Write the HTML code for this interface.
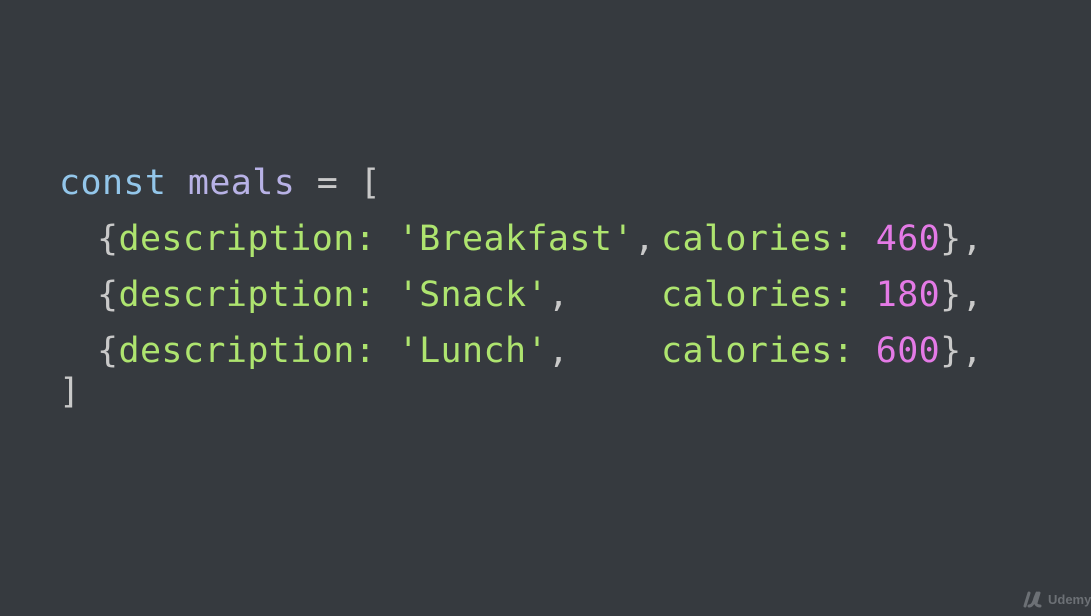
<!DOCTYPE html>
<html><head><style>
html,body{margin:0;padding:0;}
body{width:1091px;height:616px;background:#363a3f;position:relative;overflow:hidden;font-family:"DejaVu Sans Mono","Liberation Mono",monospace;font-size:35px;letter-spacing:0.4px;}
.l{position:absolute;white-space:pre;line-height:40px;}
.k{color:#93c6ea}.v{color:#b8b2e6}.p{color:#c9c9c9}.g{color:#aee46f}.n{color:#e47ae6}
</style></head><body>
<div class="l" style="left:59px;top:163px"><span class="k">const</span> <span class="v">meals</span> <span class="p">= [</span></div>
<div class="l" style="left:97px;top:219px"><span class="p">{</span><span class="g">description: 'Breakfast'</span><span class="p">,</span></div>
<div class="l" style="left:97px;top:275px"><span class="p">{</span><span class="g">description: 'Snack'</span><span class="p">,</span></div>
<div class="l" style="left:97px;top:331px"><span class="p">{</span><span class="g">description: 'Lunch'</span><span class="p">,</span></div>
<div class="l" style="left:661px;top:219px"><span class="g">calories: </span><span class="n">460</span><span class="p">},</span></div>
<div class="l" style="left:661px;top:275px"><span class="g">calories: </span><span class="n">180</span><span class="p">},</span></div>
<div class="l" style="left:661px;top:331px"><span class="g">calories: </span><span class="n">600</span><span class="p">},</span></div>
<div class="l p" style="left:59px;top:372px">]</div>
<div style="position:absolute;left:1022px;top:590px;color:#6c7075;font-family:'Liberation Sans',sans-serif;font-weight:bold;font-size:13px;letter-spacing:0;display:flex;align-items:center;gap:4px">
<svg width="22" height="18" viewBox="0 0 22 18"><path d="M3 16 L7 3 M7 16 C10 16 12 12 13 8 L15 3 M13 10 C13 14 15 16 18 16 M17 3 L14 13" stroke="#6c7075" stroke-width="3" fill="none" stroke-linecap="round"/></svg>Udemy</div>
</body></html>
